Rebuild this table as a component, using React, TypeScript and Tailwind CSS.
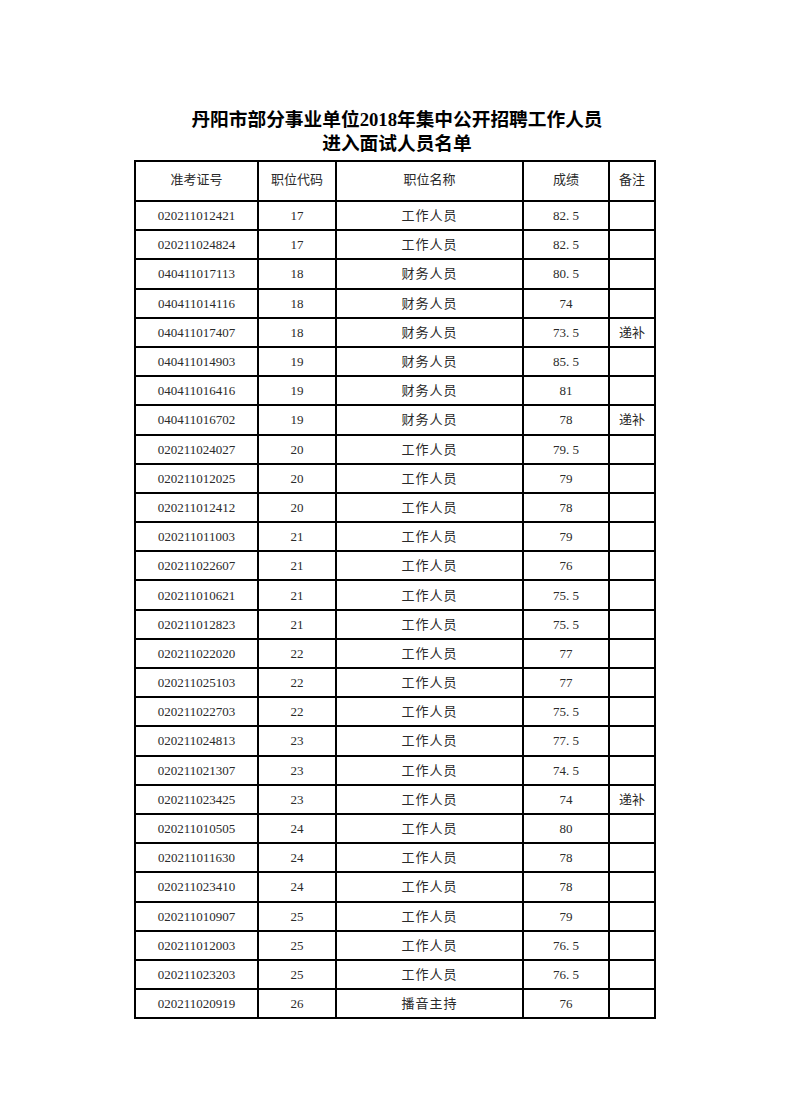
import React from 'react';

type Row = [string, string, string, string, string?];

const ROWS: Row[] = [
  ['020211012421', '17', '工作人员', '82.5'],
  ['020211024824', '17', '工作人员', '82.5'],
  ['040411017113', '18', '财务人员', '80.5'],
  ['040411014116', '18', '财务人员', '74'],
  ['040411017407', '18', '财务人员', '73.5', '递补'],
  ['040411014903', '19', '财务人员', '85.5'],
  ['040411016416', '19', '财务人员', '81'],
  ['040411016702', '19', '财务人员', '78', '递补'],
  ['020211024027', '20', '工作人员', '79.5'],
  ['020211012025', '20', '工作人员', '79'],
  ['020211012412', '20', '工作人员', '78'],
  ['020211011003', '21', '工作人员', '79'],
  ['020211022607', '21', '工作人员', '76'],
  ['020211010621', '21', '工作人员', '75.5'],
  ['020211012823', '21', '工作人员', '75.5'],
  ['020211022020', '22', '工作人员', '77'],
  ['020211025103', '22', '工作人员', '77'],
  ['020211022703', '22', '工作人员', '75.5'],
  ['020211024813', '23', '工作人员', '77.5'],
  ['020211021307', '23', '工作人员', '74.5'],
  ['020211023425', '23', '工作人员', '74', '递补'],
  ['020211010505', '24', '工作人员', '80'],
  ['020211011630', '24', '工作人员', '78'],
  ['020211023410', '24', '工作人员', '78'],
  ['020211010907', '25', '工作人员', '79'],
  ['020211012003', '25', '工作人员', '76.5'],
  ['020211023203', '25', '工作人员', '76.5'],
  ['020211020919', '26', '播音主持', '76'],
];

const cell = 'border-2 border-black text-center p-0';

const App: React.FC = () => {
  return (
    <div className="w-[792px] h-[1120px] bg-white pt-[107px] font-['Liberation_Serif','Noto_Sans_CJK_SC',serif] text-[#2a2a2a]">
      <h1 className="text-center text-[18.7px] leading-[22px] font-bold text-black font-['Noto_Sans_CJK_SC',sans-serif] ml-[2px]">
        丹阳市部分事业单位<span className="font-['Liberation_Serif',serif]">2018</span>年集中公开招聘工作人员
        <br />
        进入面试人员名单
      </h1>

      <table className="mt-[7px] ml-[134px] border-collapse text-[13px] leading-none table-fixed w-[520px]">
        <colgroup>
          <col className="w-[123px]" />
          <col className="w-[78px]" />
          <col className="w-[187px]" />
          <col className="w-[86px]" />
          <col className="w-[46px]" />
        </colgroup>
        <thead>
          <tr className="h-[40px]">
            <th className={`${cell} font-normal pb-[3px]`}>准考证号</th>
            <th className={`${cell} font-normal pb-[3px]`}>职位代码</th>
            <th className={`${cell} font-normal pb-[3px]`}>职位名称</th>
            <th className={`${cell} font-normal pb-[3px]`}>成绩</th>
            <th className={`${cell} font-normal pb-[3px]`}>备注</th>
          </tr>
        </thead>
        <tbody>
          {ROWS.map((r) => (
            <tr key={r[0]} className="h-[29.2px]">
              <td className={cell}>{r[0]}</td>
              <td className={cell}>{r[1]}</td>
              <td className={`${cell} tracking-[1px]`}>{r[2]}</td>
              <td className={cell}>{r[3].replace('.', '. ')}</td>
              <td className={cell}>{r[4] ?? ''}</td>
            </tr>
          ))}
        </tbody>
      </table>
    </div>
  );
};

export default App;
